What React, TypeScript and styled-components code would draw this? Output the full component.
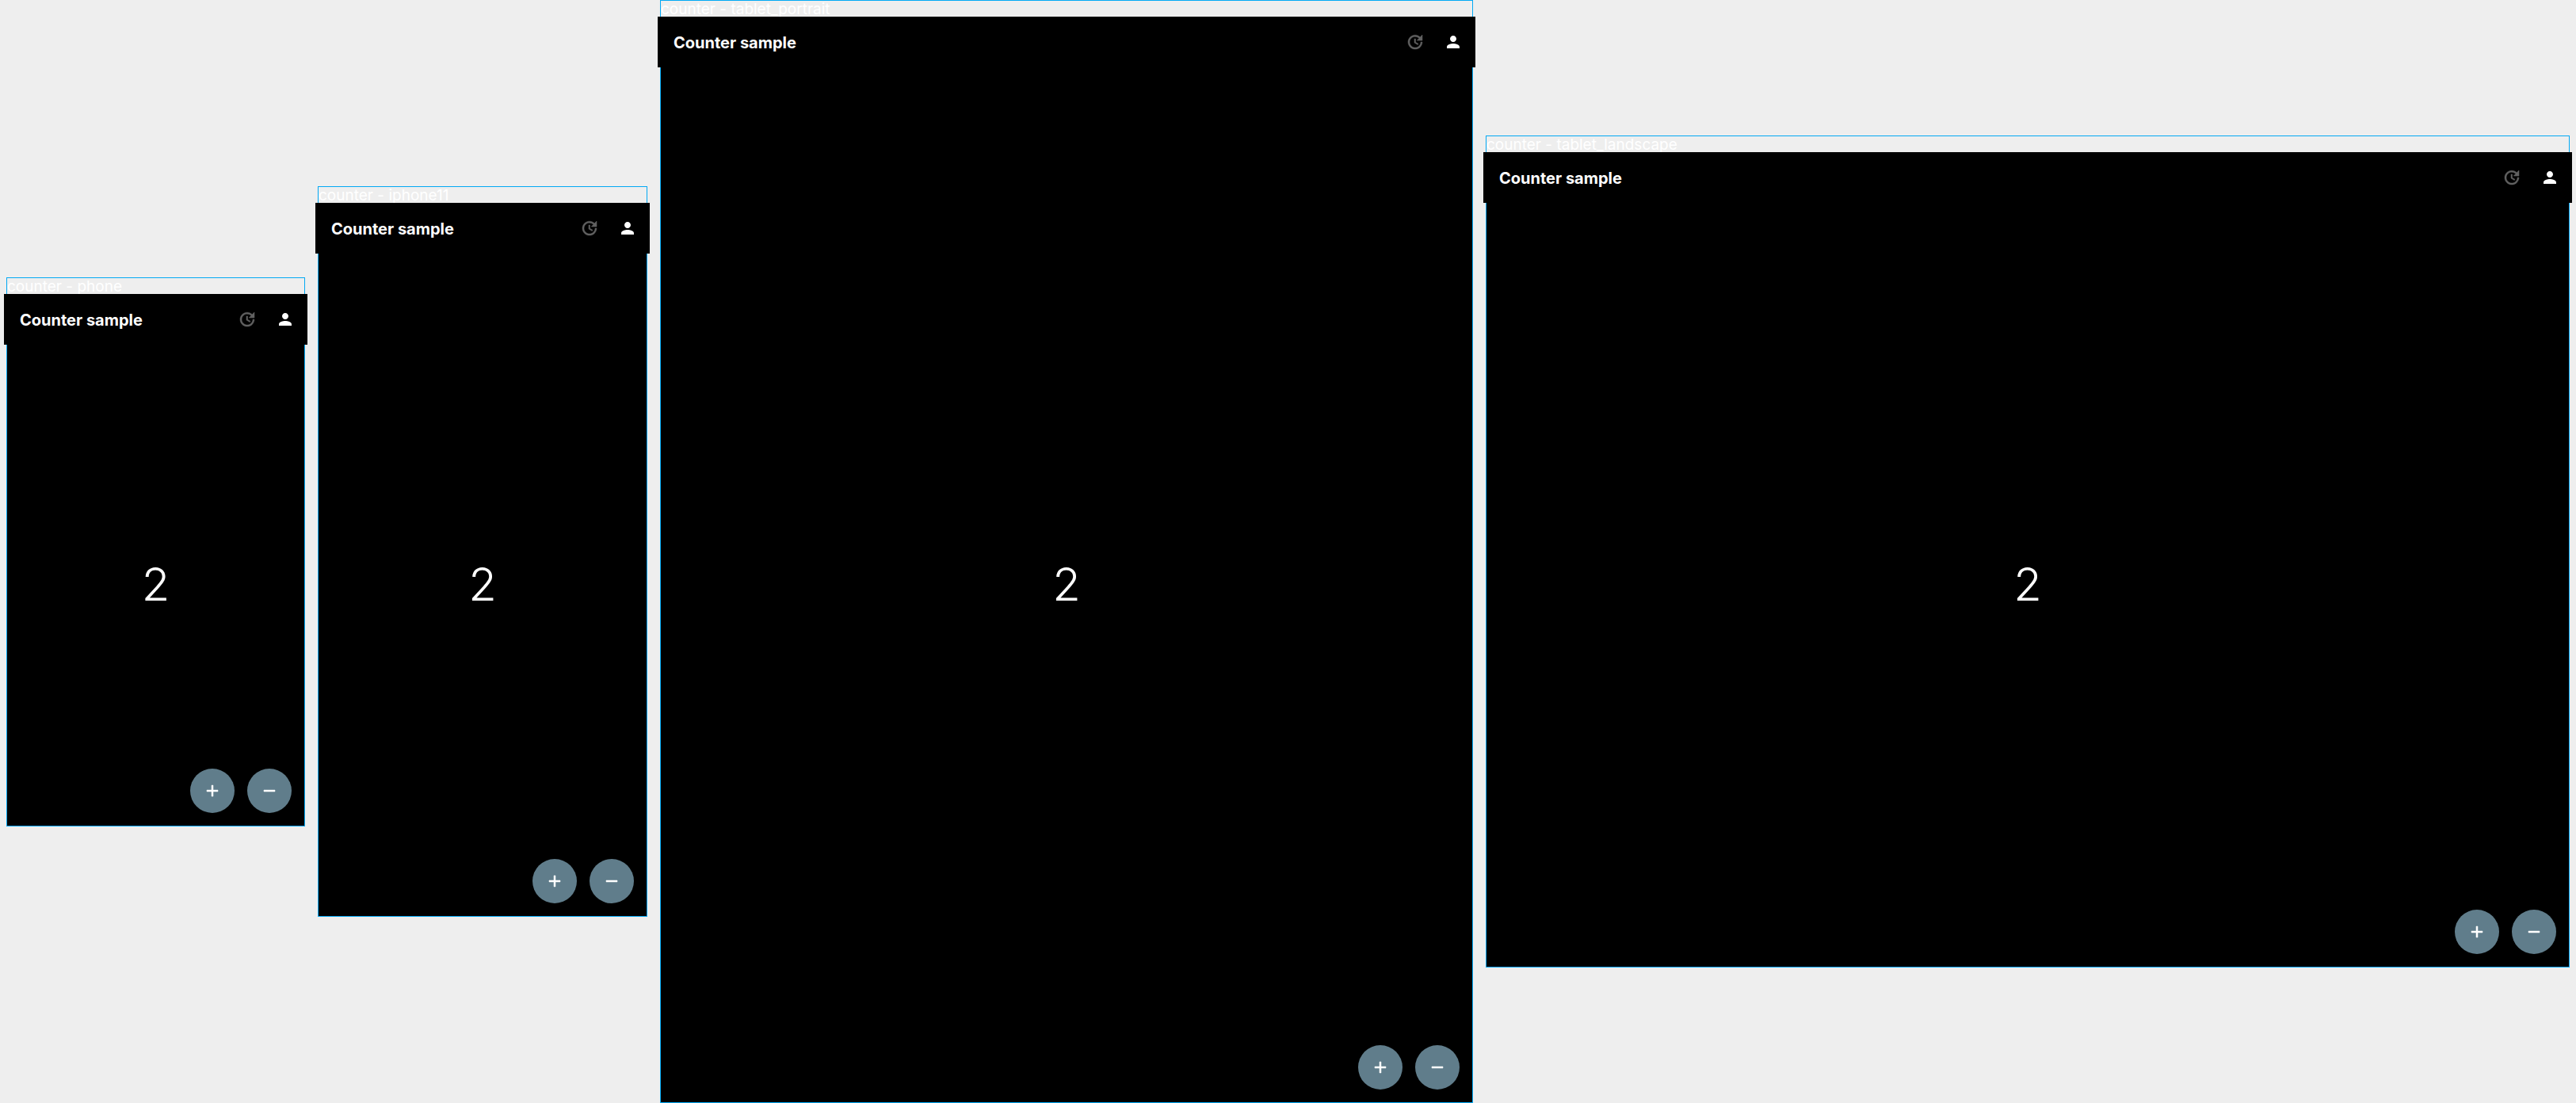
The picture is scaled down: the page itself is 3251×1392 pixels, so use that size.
import React, { useState } from "react";
import styled, { createGlobalStyle } from "styled-components";
import { MdAdd, MdPerson, MdRemove, MdUpdate } from "react-icons/md";

const GlobalStyle = createGlobalStyle`
  body {
    margin: 0;
    background: #eeeeee;
    font-family: Inter, "Liberation Sans", sans-serif;
  }
`;

const Gallery = styled.main`
  display: flex;
  align-items: center;
  gap: 16px;
  box-sizing: border-box;
  min-height: 100vh;
  padding: 0 8px;
`;

const Frame = styled.section<{ $ratio: number }>`
  flex: ${(p) => p.$ratio} 1 0;
  min-width: 0;
  border: 1px solid #03a9f4;
`;

const FrameLabel = styled.h2`
  height: 20px;
  margin: 0;
  color: #ffffff;
  font-size: 19px;
  font-weight: 400;
  line-height: 22px;
  white-space: nowrap;
`;

const Screen = styled.div<{ $height: number }>`
  display: flex;
  flex-direction: column;
  min-height: ${(p) => p.$height}px;
  background: #000000;
  color: #ffffff;
`;

const AppBar = styled.header`
  position: relative;
  display: flex;
  align-items: center;
  gap: 24px;
  height: 64px;
  margin: 0 -4px;
  padding: 0 16px 0 20px;
  background: #000000;
`;

const Title = styled.h1`
  flex: 1;
  margin: 0;
  padding-top: 2px;
  font-size: 20px;
  font-weight: 700;
  line-height: 24px;
  white-space: nowrap;
`;

const IconButton = styled.button`
  display: flex;
  padding: 0;
  border: 0;
  background: none;
  color: #ffffff;
  font-size: 24px;
  cursor: pointer;

  &:disabled {
    color: #616161;
    cursor: default;
  }

  &:disabled path:not([fill="none"]) {
    stroke-width: 0.5;
  }
`;

const Content = styled.div`
  flex: 1;
  display: grid;
  grid-template-areas: "stack";
`;

const Count = styled.output`
  grid-area: stack;
  place-self: center;
  padding-bottom: 2px;
  font-size: 58px;
  font-weight: 300;
  line-height: 72px;
`;

const Actions = styled.div`
  grid-area: stack;
  place-self: end;
  display: flex;
  gap: 16px;
  padding: 16px;
`;

const RoundButton = styled.button`
  display: flex;
  align-items: center;
  justify-content: center;
  width: 56px;
  height: 56px;
  padding: 0;
  border: 0;
  border-radius: 50%;
  background: #607d8b;
  color: #ffffff;
  font-size: 24px;
  cursor: pointer;

  path:not([fill="none"]) {
    stroke-width: 0.5;
  }
`;

type Device = { name: string; width: number; height: number };

const devices: Device[] = [
  { name: "phone", width: 375, height: 671 },
  { name: "iphone11", width: 414, height: 900 },
  { name: "tablet_portrait", width: 1024, height: 1370 },
  { name: "tablet_landscape", width: 1366, height: 1028 },
];

function CounterFrame({ device }: { device: Device }) {
  const [count, setCount] = useState(2);
  return (
    <Frame $ratio={device.width}>
      <FrameLabel>counter - {device.name}</FrameLabel>
      <Screen $height={device.height}>
        <AppBar>
          <Title>Counter sample</Title>
          <IconButton disabled aria-label="History">
            <MdUpdate />
          </IconButton>
          <IconButton aria-label="Account">
            <MdPerson />
          </IconButton>
        </AppBar>
        <Content>
          <Count>{count}</Count>
          <Actions>
            <RoundButton aria-label="Increment" onClick={() => setCount(count + 1)}>
              <MdAdd />
            </RoundButton>
            <RoundButton aria-label="Decrement" onClick={() => setCount(count - 1)}>
              <MdRemove />
            </RoundButton>
          </Actions>
        </Content>
      </Screen>
    </Frame>
  );
}

export default function App() {
  return (
    <>
      <GlobalStyle />
      <Gallery>
        {devices.map((device) => (
          <CounterFrame key={device.name} device={device} />
        ))}
      </Gallery>
    </>
  );
}
